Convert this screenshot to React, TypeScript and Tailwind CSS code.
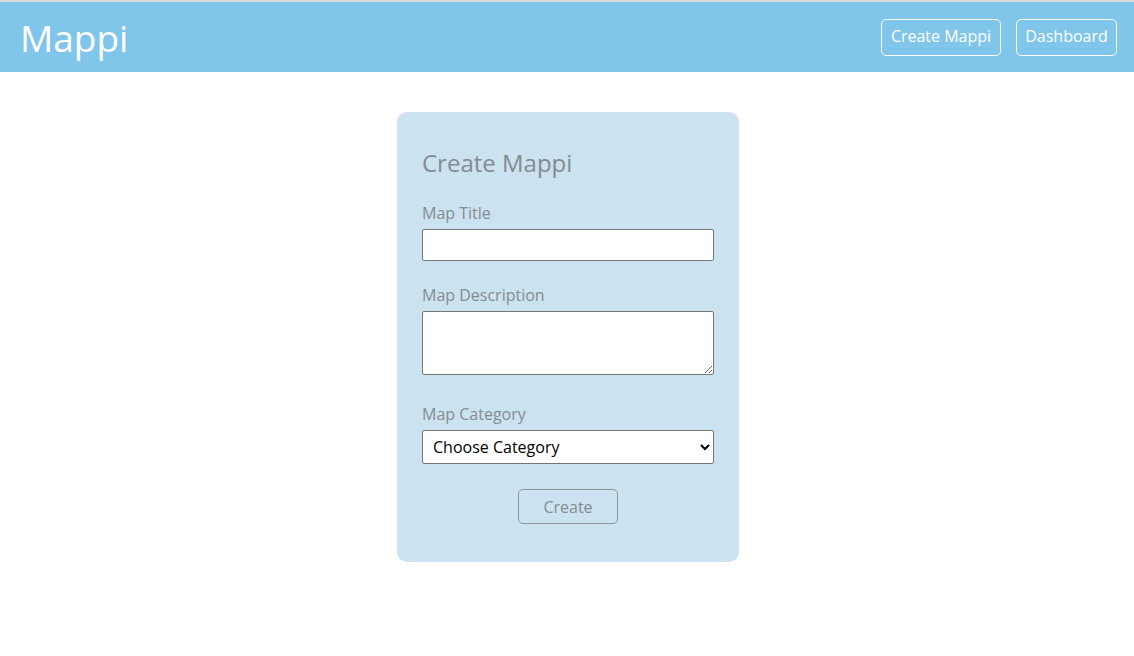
import React from "react";

const font = { fontFamily: '"Open Sans", "Noto Sans", Arial, sans-serif' };

function Header() {
  return (
    <header className="flex h-[72px] items-center justify-between border-t-2 border-[#dcdcdc] bg-[#7fc6ea] pl-5 pr-[17px]">
      <span className="text-[37px] leading-none text-white">Mappi</span>
      <nav className="flex gap-[15px]">
        <button className="h-[37px] w-[120px] rounded-[5px] border border-white pb-[2px] text-[16px] font-medium text-white">
          Create Mappi
        </button>
        <button className="h-[37px] w-[101px] rounded-[5px] border border-white pb-[2px] text-[16px] font-medium text-white">
          Dashboard
        </button>
      </nav>
    </header>
  );
}

function CreateMapForm() {
  return (
    <form className="flex h-[450px] w-[342px] flex-col rounded-[10px] bg-[#cbe2f0] px-[25px] pt-[35px] text-[#858c91]">
      {/* TITLE */}
      <h2 className="text-[24px] font-medium leading-[32px]">Create Mappi</h2>

      {/* MAP TITLE */}
      <label className="mt-[22px] mb-[4px] text-[16px] leading-[24px]">Map Title</label>
      <input
        type="text"
        className="h-[32px] w-full rounded-[2px] border border-[#767676] bg-white px-2"
      />

      {/* DESCRIPTION */}
      <label className="mt-[22px] mb-[4px] text-[16px] leading-[24px]">Map Description</label>
      <textarea className="h-[64px] w-full resize-y rounded-[2px] border border-[#767676] bg-white px-2" />

      {/* CATEGORY */}
      <label className="mt-[27px] mb-[4px] text-[16px] leading-[24px]">Map Category</label>
      <select className="h-[34px] w-full rounded-[2px] border border-[#767676] bg-white pl-[6px] pr-1 text-[16px] text-black">
        <option>Choose Category</option>
      </select>

      {/* SUBMIT */}
      <div className="mt-[25px] flex justify-center">
        <button
          type="button"
          className="h-[35px] w-[100px] rounded-[5px] border border-[#8f979c] text-[16px] text-[#858c91]"
        >
          Create
        </button>
      </div>
    </form>
  );
}

export default function App() {
  return (
    <div className="min-h-[656px] bg-white" style={font}>
      <Header />
      <main className="flex justify-center pl-[2px] pt-[40px]">
        <CreateMapForm />
      </main>
    </div>
  );
}
